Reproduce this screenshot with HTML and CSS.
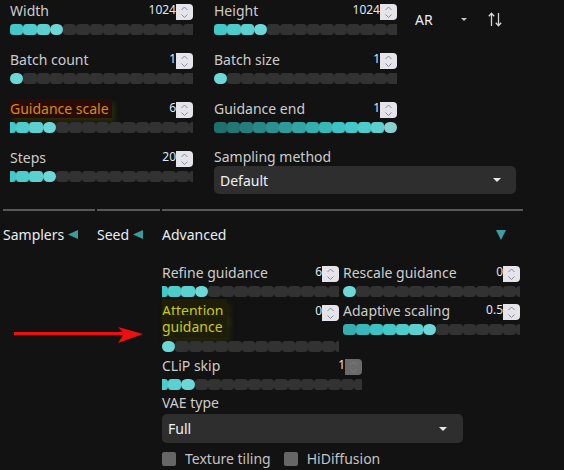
FILE: index.html
```html
<!DOCTYPE html>
<html lang="en">
<head>
<meta charset="utf-8">
<title>Generation settings</title>
<link rel="stylesheet" href="styles.css">
</head>
<body>
<div class="top">
  <div class="field">
    <div class="head"><span class="lbl">Width</span><span class="val">1024</span><span class="spin"><svg width="17" height="16" viewBox="0 0 17 16"><path d="M5.5 6 8.5 3 11.5 6M5.5 10.5 8.5 13.5 11.5 10.5" fill="none" stroke="#8c8c96"/></svg></span></div>
    <div class="track"><span class="s f3"></span><span class="s f2"></span><span class="s f1"></span><span class="s h"></span><span class="s"></span><span class="s"></span><span class="s"></span><span class="s"></span><span class="s"></span><span class="s"></span><span class="s"></span><span class="s"></span><span class="s"></span><span class="s"></span></div>
  </div>
  <div class="field">
    <div class="head"><span class="lbl">Height</span><span class="val">1024</span><span class="spin"><svg width="17" height="16" viewBox="0 0 17 16"><path d="M5.5 6 8.5 3 11.5 6M5.5 10.5 8.5 13.5 11.5 10.5" fill="none" stroke="#8c8c96"/></svg></span></div>
    <div class="track"><span class="s f3"></span><span class="s f2"></span><span class="s f1"></span><span class="s h"></span><span class="s"></span><span class="s"></span><span class="s"></span><span class="s"></span><span class="s"></span><span class="s"></span><span class="s"></span><span class="s"></span><span class="s"></span><span class="s"></span></div>
  </div>
  <div class="ar">
    <span class="ar-txt">AR</span>
    <svg class="ar-caret" width="6" height="3" viewBox="0 0 6 3"><path d="M0 0H6L3 3Z" fill="#c8c8c8"/></svg>
    <svg class="swap" width="14" height="15" viewBox="0 0 14 15"><path d="M3.5 14V1.5M0.8 4.3 3.5 1.2 6.2 4.3M10.5 1V13.5M7.8 10.7 10.5 13.8 13.2 10.7" fill="none" stroke="#d6d6d6" stroke-width="1.3"/></svg>
  </div>

  <div class="field c1">
    <div class="head"><span class="lbl">Batch count</span><span class="val">1</span><span class="spin"><svg width="17" height="16" viewBox="0 0 17 16"><path d="M5.5 6 8.5 3 11.5 6M5.5 10.5 8.5 13.5 11.5 10.5" fill="none" stroke="#8c8c96"/></svg></span></div>
    <div class="track"><span class="s h"></span><span class="s"></span><span class="s"></span><span class="s"></span><span class="s"></span><span class="s"></span><span class="s"></span><span class="s"></span><span class="s"></span><span class="s"></span><span class="s"></span><span class="s"></span><span class="s"></span><span class="s"></span></div>
  </div>
  <div class="field">
    <div class="head"><span class="lbl">Batch size</span><span class="val">1</span><span class="spin"><svg width="17" height="16" viewBox="0 0 17 16"><path d="M5.5 6 8.5 3 11.5 6M5.5 10.5 8.5 13.5 11.5 10.5" fill="none" stroke="#8c8c96"/></svg></span></div>
    <div class="track"><span class="s h"></span><span class="s"></span><span class="s"></span><span class="s"></span><span class="s"></span><span class="s"></span><span class="s"></span><span class="s"></span><span class="s"></span><span class="s"></span><span class="s"></span><span class="s"></span><span class="s"></span><span class="s"></span></div>
  </div>

  <div class="field c1">
    <div class="head"><span class="lbl"><span class="mark-r">Guidance scale</span></span><span class="val">6</span><span class="spin"><svg width="17" height="16" viewBox="0 0 17 16"><path d="M5.5 6 8.5 3 11.5 6M5.5 10.5 8.5 13.5 11.5 10.5" fill="none" stroke="#8c8c96"/></svg></span></div>
    <div class="track shift"><span class="s f3"></span><span class="s f2"></span><span class="s f1"></span><span class="s h"></span><span class="s"></span><span class="s"></span><span class="s"></span><span class="s"></span><span class="s"></span><span class="s"></span><span class="s"></span><span class="s"></span><span class="s"></span><span class="s"></span><span class="s"></span></div>
  </div>
  <div class="field">
    <div class="head"><span class="lbl">Guidance end</span><span class="val">1</span><span class="spin"><svg width="17" height="16" viewBox="0 0 17 16"><path d="M5.5 6 8.5 3 11.5 6M5.5 10.5 8.5 13.5 11.5 10.5" fill="none" stroke="#8c8c96"/></svg></span></div>
    <div class="track fit"><span class="s f13"></span><span class="s f12"></span><span class="s f11"></span><span class="s f10"></span><span class="s f9"></span><span class="s f8"></span><span class="s f7"></span><span class="s f6"></span><span class="s f5"></span><span class="s f4"></span><span class="s f3"></span><span class="s f2"></span><span class="s f1"></span><span class="s h end"></span></div>
  </div>

  <div class="field c1">
    <div class="head"><span class="lbl">Steps</span><span class="val">20</span><span class="spin"><svg width="17" height="16" viewBox="0 0 17 16"><path d="M5.5 6 8.5 3 11.5 6M5.5 10.5 8.5 13.5 11.5 10.5" fill="none" stroke="#8c8c96"/></svg></span></div>
    <div class="track shift"><span class="s f3"></span><span class="s f2"></span><span class="s f1"></span><span class="s h"></span><span class="s"></span><span class="s"></span><span class="s"></span><span class="s"></span><span class="s"></span><span class="s"></span><span class="s"></span><span class="s"></span><span class="s"></span><span class="s"></span><span class="s"></span></div>
  </div>
  <div class="field">
    <div class="lbl plain">Sampling method</div>
    <div class="select sampler"><span>Default</span><svg width="8" height="4" viewBox="0 0 8 4"><path d="M0 0H8L4 4Z" fill="#e8e8e8"/></svg></div>
  </div>
</div>

<div class="bottom">
  <div class="col colA">
    <div class="title">Samplers <svg width="10" height="9" viewBox="0 0 10 9"><path d="M0 4.5 10 0V9Z" fill="#3c9c9c"/></svg></div>
  </div>
  <div class="col colB">
    <div class="title">Seed <svg width="10" height="9" viewBox="0 0 10 9"><path d="M0 4.5 10 0V9Z" fill="#3c9c9c"/></svg></div>
  </div>
  <div class="col colC">
    <div class="title between"><span>Advanced</span><svg width="10" height="10" viewBox="0 0 10 10"><path d="M0 0H10L5 10Z" fill="#3c9e9e"/></svg></div>
    <div class="adv">
      <div class="field">
        <div class="head"><span class="lbl">Refine guidance</span><span class="val">6</span><span class="spin"><svg width="17" height="16" viewBox="0 0 17 16"><path d="M5.5 6 8.5 3 11.5 6M5.5 10.5 8.5 13.5 11.5 10.5" fill="none" stroke="#8c8c96"/></svg></span></div>
        <div class="track shift"><span class="s f3"></span><span class="s f2"></span><span class="s f1"></span><span class="s h"></span><span class="s"></span><span class="s"></span><span class="s"></span><span class="s"></span><span class="s"></span><span class="s"></span><span class="s"></span><span class="s"></span><span class="s"></span><span class="s"></span><span class="s"></span></div>
      </div>
      <div class="field">
        <div class="head"><span class="lbl">Rescale guidance</span><span class="val">0</span><span class="spin"><svg width="17" height="16" viewBox="0 0 17 16"><path d="M5.5 6 8.5 3 11.5 6M5.5 10.5 8.5 13.5 11.5 10.5" fill="none" stroke="#8c8c96"/></svg></span></div>
        <div class="track"><span class="s h"></span><span class="s"></span><span class="s"></span><span class="s"></span><span class="s"></span><span class="s"></span><span class="s"></span><span class="s"></span><span class="s"></span><span class="s"></span><span class="s"></span><span class="s"></span><span class="s"></span><span class="s"></span></div>
      </div>
      <div class="field tall">
        <div class="head"><span class="lbl"><span class="mark-y">Attention guidance</span></span><span class="val">0</span><span class="spin"><svg width="17" height="16" viewBox="0 0 17 16"><path d="M5.5 6 8.5 3 11.5 6M5.5 10.5 8.5 13.5 11.5 10.5" fill="none" stroke="#8c8c96"/></svg></span></div>
        <div class="track"><span class="s h"></span><span class="s"></span><span class="s"></span><span class="s"></span><span class="s"></span><span class="s"></span><span class="s"></span><span class="s"></span><span class="s"></span><span class="s"></span><span class="s"></span><span class="s"></span><span class="s"></span><span class="s"></span></div>
      </div>
      <div class="field">
        <div class="head"><span class="lbl">Adaptive scaling</span><span class="val">0.5</span><span class="spin"><svg width="17" height="16" viewBox="0 0 17 16"><path d="M5.5 6 8.5 3 11.5 6M5.5 10.5 8.5 13.5 11.5 10.5" fill="none" stroke="#8c8c96"/></svg></span></div>
        <div class="track"><span class="s f6"></span><span class="s f5"></span><span class="s f4"></span><span class="s f3"></span><span class="s f2"></span><span class="s f1"></span><span class="s h"></span><span class="s"></span><span class="s"></span><span class="s"></span><span class="s"></span><span class="s"></span><span class="s"></span><span class="s"></span></div>
      </div>
    </div>

    <div class="field clip">
      <div class="head"><span class="lbl">CLiP skip</span><span class="val">1</span><span class="spin off"><svg width="17" height="16" viewBox="0 0 17 16"><path d="M5.5 6 8.5 3 11.5 6M5.5 10.5 8.5 13.5 11.5 10.5" fill="none" stroke="#7c7c7c"/></svg></span></div>
      <div class="track shift"><span class="s f2"></span><span class="s f1"></span><span class="s h"></span><span class="s"></span><span class="s"></span><span class="s"></span><span class="s"></span><span class="s"></span><span class="s"></span><span class="s"></span><span class="s"></span><span class="s"></span><span class="s"></span><span class="s"></span><span class="s"></span><span class="s"></span><span class="s"></span></div>
    </div>

    <div class="vae">
      <div class="lbl plain">VAE type</div>
      <div class="select"><span>Full</span><svg width="8" height="4" viewBox="0 0 8 4"><path d="M0 0H8L4 4Z" fill="#e8e8e8"/></svg></div>
    </div>

    <div class="checks">
      <span class="cb"></span><span>Texture tiling</span>
      <span class="cb second"></span><span>HiDiffusion</span>
    </div>
  </div>
</div>

<svg class="arrow" width="134" height="22" viewBox="0 0 134 22">
  <rect x="2" y="8" width="112" height="3" fill="#ec1010"/>
  <path d="M106 3 131 10 106 19 112 9.5Z" fill="#ec1010"/>
</svg>
</body>
</html>
```

FILE: styles.css
```css
* { box-sizing: border-box; }

html, body {
  margin: 0;
  padding: 0;
}

body {
  position: relative;
  width: 564px;
  height: 470px;
  overflow: hidden;
  background: #121212;
  color: #cccccc;
  font-family: "Noto Sans", "Open Sans", sans-serif;
  font-size: 14px;
}

/* ---------- top grid ---------- */
.top {
  display: grid;
  grid-template-columns: 183px 183px 1fr;
  grid-auto-rows: 49px;
  column-gap: 21px;
  margin-left: 10px;
}

.c1 { grid-column: 1; }

.field {
  display: flex;
  flex-direction: column;
}

.head {
  display: flex;
  align-items: flex-end;
  height: 20px;
}

.lbl {
  flex: 0 1 auto;
  line-height: 19px;
  white-space: nowrap;
}

.lbl.plain { flex: none; }

.val {
  margin-left: auto;
  margin-bottom: 3px;
  font-size: 12px;
  line-height: 14px;
  color: #dfe7f0;
}

.spin {
  flex: none;
  display: block;
  width: 17px;
  height: 16px;
  background: #e4e4ea;
  border-radius: 0 4px 4px 0;
}

.spin svg { display: block; }

.spin.off { background: #6a6a6a; }

/* ---------- segmented sliders ---------- */
.track {
  display: flex;
  height: 11px;
  margin-top: 4px;
  overflow: hidden;
}

.s {
  flex: 0 0 13.3px;
  height: 11px;
  border-radius: 3.5px;
  background: #323232;
}

.track.shift .s:first-child { margin-left: -7.3px; }
.track.fit .s { flex: 1 1 0; }

.f13 { background: #1f6f6f; }
.f12 { background: #227676; }
.f11 { background: #257e7e; }
.f10 { background: #288888; }
.f9  { background: #2b9090; }
.f8  { background: #2e9a9a; }
.f7  { background: #32a4a4; }
.f6  { background: #35aeae; }
.f5  { background: #38b8b8; }
.f4  { background: #3cc2c2; }
.f3  { background: #42c8c8; }
.f2  { background: #4ecccc; }
.f1  { background: #5cd0d0; }

.s.h {
  background: #6dd6d6;
  border-radius: 5.5px;
}

.s.h.end { background: #86d0d0; }

/* ---------- highlight marks ---------- */
.mark-r {
  color: #d88a12;
  background: #2a0b06;
  padding-right: 3px;
  box-shadow: 3px 4px 5px rgba(90, 90, 0, 0.35);
}

.mark-y {
  color: #c9c91c;
  background: #1e1e08;
  padding: 2px 4px 2px 0;
  -webkit-box-decoration-break: clone;
  box-decoration-break: clone;
  box-shadow: 3px 4px 6px rgba(80, 80, 0, 0.3);
}

/* ---------- AR column ---------- */
.ar {
  display: flex;
  align-items: center;
  height: 38px;
  margin-left: -3px;
}

.ar-txt { color: #e8eef4; }

.ar-caret { margin-left: 28px; }

.swap { margin-left: 21px; }

/* ---------- selects ---------- */
.select {
  display: flex;
  align-items: center;
  justify-content: space-between;
  height: 29px;
  margin-top: 2px;
  padding: 0 16px 0 6px;
  background: #2e2e2e;
  border-radius: 5px;
  color: #eef2f6;
}

.select.sampler {
  height: 28px;
  margin-top: 0;
  width: 302px;
  padding-right: 15px;
}

/* ---------- bottom tabs ---------- */
.bottom {
  display: flex;
  gap: 2px;
  margin: 13px 0 0 3px;
}

.col { border-top: 2px solid #585858; }
.colA { width: 92px; }
.colB { width: 63px; }
.colC { width: 361px; }

.title {
  display: flex;
  align-items: center;
  gap: 4px;
  padding-top: 14px;
  line-height: 19px;
  color: #e8eef2;
}

.title.between {
  justify-content: space-between;
  padding-right: 17px;
}

.adv {
  display: grid;
  grid-template-columns: 177px 177px;
  column-gap: 4px;
  row-gap: 3px;
  align-items: start;
  margin-top: 18px;
}

.tall .head {
  height: auto;
  align-items: flex-start;
}

.tall .lbl {
  max-width: 96px;
  margin-top: 3px;
  line-height: 16px;
  white-space: normal;
}

.tall .val { margin-top: 4px; margin-bottom: 0; }
.tall .spin { margin-top: 5px; }
.tall .track { margin-top: 6px; }

.clip {
  width: 200px;
  margin-top: 3px;
}

.vae {
  width: 301px;
  margin-top: 3px;
}

.checks {
  display: flex;
  align-items: center;
  margin-top: 6px;
  line-height: 19px;
  color: #c4c4c4;
}

.cb {
  width: 14px;
  height: 14px;
  margin-right: 9px;
  background: #666666;
  border-radius: 2px;
}

.cb.second { margin-left: 13px; }

/* ---------- annotation arrow ---------- */
.arrow {
  position: absolute;
  left: 12px;
  top: 324px;
}
```
